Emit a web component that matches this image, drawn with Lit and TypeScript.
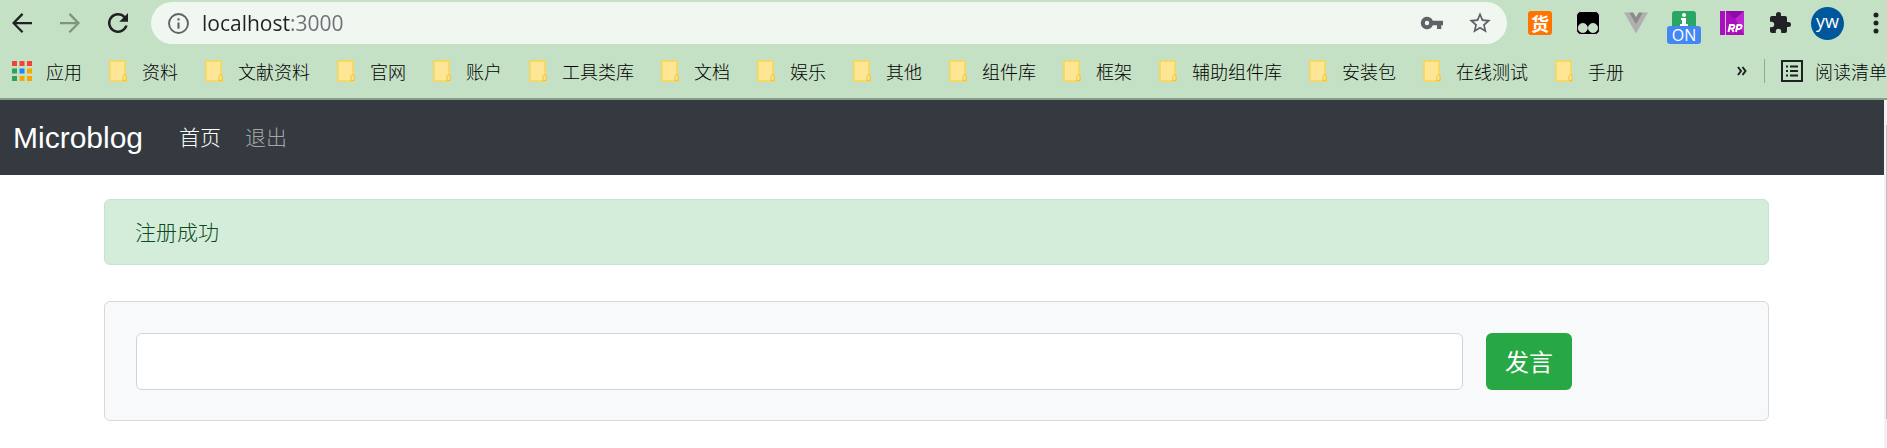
import { LitElement, html, css, svg } from "lit";
import { customElement } from "lit/decorators.js";

const BOOKMARKS = [
  "资料", "文献资料", "官网", "账户", "工具类库", "文档", "娱乐",
  "其他", "组件库", "框架", "辅助组件库", "安装包", "在线测试", "手册",
];

const APP_DOTS = [
  "#f44336", "#f44336", "#f44336",
  "#34a05a", "#1e88f5", "#f9a602",
  "#34a05a", "#f9a602", "#f9a602",
];

@customElement("browser-toolbar")
class BrowserToolbar extends LitElement {
  static styles = css`
    :host {
      display: flex;
      align-items: center;
      gap: 24px;
      padding: 2px 3px 0 7px;
      color: #202124;
      font-family: "Open Sans", "Noto Sans CJK SC", sans-serif;
    }
    button {
      display: flex;
      flex: none;
      align-items: center;
      justify-content: center;
      padding: 0;
      border: 0;
      background: none;
      color: inherit;
      font: inherit;
    }
    svg { display: block; }
    .nav { display: flex; gap: 18px; }
    .nav button:disabled { color: #7f947f; }
    .address {
      display: flex;
      flex: 1;
      min-width: 0;
      align-items: center;
      gap: 11px;
      box-sizing: border-box;
      height: 42px;
      margin: 0 -3px 0 -6px;
      padding: 0 14px 0 15px;
      border-radius: 21px;
      background: #f0f7f0;
      color: #5f6368;
    }
    .address input {
      flex: 1;
      min-width: 0;
      padding: 0;
      border: 0;
      outline: 0;
      font: 21px/30px "Open Sans", sans-serif;
      color: transparent;
      background: linear-gradient(90deg, #202124 89px, #6b7075 89px);
      -webkit-background-clip: text;
      background-clip: text;
    }
    .actions { display: flex; align-items: center; gap: 23px; }
    .ext { position: relative; }
    .goods {
      width: 24px;
      height: 24px;
      border-radius: 3px;
      background: #ff7300;
      color: #fff;
      font: 700 18px/24px "Noto Sans CJK SC", sans-serif;
    }
    .badge {
      position: absolute;
      top: 15px;
      left: -5px;
      width: 34px;
      height: 18px;
      border-radius: 3px;
      background: #4487f4;
      color: #fff;
      font: 16px/18px "Open Sans", sans-serif;
      text-align: center;
    }
    .avatar {
      width: 33px;
      height: 33px;
      margin: 0 0 0 -5px;
      border-radius: 50%;
      background: #01579b;
      color: #fff;
      font: 18px/28px "Open Sans", sans-serif;
      padding-bottom: 4px;
    }
  `;

  render() {
    return html`
      <div class="nav">
        <button aria-label="后退">
          <svg width="30" height="30" viewBox="0 0 24 24" fill="currentColor"><path d="M20 11.1H7.4l5.7-5.8L11.8 4 4 12l7.8 8 1.3-1.3-5.7-5.8H20z"/></svg>
        </button>
        <button aria-label="前进" disabled>
          <svg width="30" height="30" viewBox="0 0 24 24" fill="currentColor"><path d="M4 11.1h12.6l-5.7-5.8L12.2 4l7.8 8-7.8 8-1.3-1.3 5.7-5.8H4z"/></svg>
        </button>
        <button aria-label="重新加载">
          <svg width="30" height="30" viewBox="0 0 24 24" fill="currentColor"><path d="M17.65 6.35A8 8 0 1 0 19.73 14h-2.08A6 6 0 1 1 12 6c1.66 0 3.14.69 4.22 1.78L13 11h7V4z"/></svg>
        </button>
      </div>
      <div class="address">
        <svg width="25" height="25" viewBox="0 0 24 24" fill="currentColor"><path d="M11 17h2v-6h-2zm1-15a10 10 0 1 0 0 20 10 10 0 0 0 0-20zm0 18.2a8.2 8.2 0 1 1 0-16.4 8.2 8.2 0 0 1 0 16.4zM11 9h2V7h-2z"/></svg>
        <input aria-label="地址" value="localhost:3000" spellcheck="false" />
        <div class="actions">
          <button aria-label="密码">
            <svg width="24" height="24" viewBox="0 0 24 24" fill="currentColor"><path d="M12.9 9.700A6.300 6.300 0 1 0 12.900 14.300H17v3.700h4.300v-3.700h1.700V9.700zM7 14.200a2.200 2.200 0 1 1 0-4.400 2.200 2.200 0 0 1 0 4.400z"/></svg>
          </button>
          <button aria-label="收藏">
            <svg width="26" height="26" viewBox="0 0 24 24" fill="currentColor"><path d="M22 9.24l-7.19-.62L12 2 9.19 8.63 2 9.24l5.46 4.73L5.82 21 12 17.27 18.18 21l-1.63-7.03zM12 15.4l-3.76 2.27 1-4.28-3.32-2.88 4.38-.38L12 6.1l1.71 4.04 4.38.38-3.32 2.88 1 4.28z"/></svg>
          </button>
        </div>
      </div>
      <button class="goods">货</button>
      <button aria-label="脚本管理">
        <svg width="24" height="24" viewBox="0 0 24 24"><rect x=".5" y=".5" width="23" height="23" rx="4.5" fill="#000" stroke="#d9d9d9"/><circle cx="6.8" cy="17" r="4.6" fill="#c5e1c5" stroke="#eee" stroke-width=".7"/><circle cx="17" cy="17" r="4.6" fill="#c5e1c5" stroke="#eee" stroke-width=".7"/></svg>
      </button>
      <button aria-label="Vue">
        <svg width="24" height="24" viewBox="0 0 24 24"><path d="M0 1.5h5L12 13.5l7-12h5L12 22.5z" fill="#b0b0b0"/><path d="M5 1.5h4.3L12 6.2l2.7-4.7H19l-7 12z" fill="#8b8b8b"/></svg>
      </button>
      <button class="ext">
        <svg width="24" height="24" viewBox="0 0 24 24"><rect width="24" height="24" rx="3" fill="#2aa563"/><circle cx="12" cy="4" r="2" fill="#fff"/><path d="M9 7h5v6h2v2H8v-2h2V9H9z" fill="#fff"/></svg>
        <span class="badge">ON</span>
      </button>
      <button aria-label="RP">
        <svg width="24" height="24" viewBox="0 0 24 24"><path d="M0 0h5v24H0zM6 0h18v24H6z" fill="#a611bd"/><path d="M5 0h1v24H5z" fill="#dfbde3"/><path d="M6 0h18L15 8z" fill="#8b0ba6"/><path d="M24 0v24L15 8z" fill="#bd27d1"/><path d="M6 24l9-16 9 16z" fill="#a70db8"/><g fill="none" stroke="#fff" stroke-width="2"><path d="M8.500 21l1.500-7h3q1.800 0 1.300 1.900T12 17.600H9.500M12 17.600l1.500 3.400M16 21l1.500-7h2.700q1.800 0 1.300 2t-2.300 2h-2.500"/></g></svg>
      </button>
      <button aria-label="扩展程序">
        <svg width="24" height="24" viewBox="0 0 24 24" fill="currentColor"><path d="M20.500 11H19V7a2 2 0 0 0-2-2h-4V3.500a2.500 2.500 0 0 0-5 0V5H4a2 2 0 0 0-2 2v3.800h1.500a2.700 2.700 0 0 1 0 5.400H2V20c0 1.100.9 2 2 2h3.800v-1.500a2.700 2.700 0 0 1 5.400 0V22H17a2 2 0 0 0 2-2v-4h1.500a2.500 2.500 0 0 0 0-5z"/></svg>
      </button>
      <button class="avatar">yw</button>
      <button class="menu" aria-label="菜单">
        <svg width="16" height="30" viewBox="0 0 16 30" fill="currentColor"><circle cx="8" cy="7" r="2.500"/><circle cx="8" cy="15" r="2.500"/><circle cx="8" cy="23" r="2.500"/></svg>
      </button>
    `;
  }
}

@customElement("bookmark-bar")
class BookmarkBar extends LitElement {
  static styles = css`
    :host {
      display: flex;
      align-items: center;
      height: 54px;
      padding-left: 12px;
      overflow: hidden;
      color: #000;
      font: 300 18px/24px "Noto Sans CJK SC", sans-serif;
      white-space: nowrap;
    }
    a {
      display: flex;
      flex: none;
      align-items: center;
      gap: 15px;
      color: inherit;
      text-decoration: none;
    }
    svg { display: block; flex: none; color: #202124; }
    .list { display: flex; flex: 1; gap: 27px; min-width: 0; overflow: hidden; }
    .apps { gap: 14px; }
    button {
      flex: none;
      margin: 0 17px 0 0;
      padding: 0;
      border: 0;
      background: none;
      color: inherit;
    }
    .rule { flex: none; width: 1px; height: 24px; background: #94a994; }
    .reading { gap: 12px; margin-left: 16px; }
  `;

  render() {
    return html`
      <nav class="list" aria-label="书签">
        <a class="apps" href="#">
          <svg width="20" height="20" viewBox="0 0 20 20">
            ${APP_DOTS.map((c, i) => svg`<rect x=${(i % 3) * 7.5} y=${Math.floor(i / 3) * 7.5} width="5" height="5" fill=${c} />`)}
          </svg>
          应用
        </a>
        ${BOOKMARKS.map((name) => html`
          <a href="#">
            <svg width="18" height="22" viewBox="0 0 18 22"><path d="M1 1h15v14.500h1.200V21H1z" fill="#ffe694" stroke="#fbd54f" stroke-width="1.500"/><path d="M14 20.500v-4q0-1.500 1.500-1.500t1.500 1.500v4z" fill="#ffe694" stroke="#edc23c"/></svg>
            ${name}
          </a>`)}
      </nav>
      <button aria-label="更多书签">
        <svg width="10" height="10" viewBox="0 0 10 10" fill="none" stroke="currentColor" stroke-width="2"><path d="M1 1l3 4-3 4M5.500 1l3 4-3 4"/></svg>
      </button>
      <span class="rule"></span>
      <a class="reading" href="#">
        <svg width="22" height="22" viewBox="0 0 22 22" fill="currentColor"><path fill-rule="evenodd" d="M0 0h22v22H0zM2 2v18h18V2z"/><path d="M5 5.500h2v2H5zm4 0h8v2H9zM5 10h2v2H5zm4 0h8v2H9zM5 14.500h2v2H5zm4 0h8v2H9z"/></svg>
        阅读清单
      </a>
    `;
  }
}

@customElement("app-root")
class AppRoot extends LitElement {
  static styles = css`
    :host {
      display: flex;
      flex-direction: column;
      min-height: 100vh;
      overflow: hidden;
      background: #fff;
      font: 300 21px/32px "Liberation Sans", "Noto Sans CJK SC", sans-serif;
    }
    .chrome { border-bottom: 2px solid #8a9c8b; background: #c5e1c5; }
    .view { display: flex; flex: 1; }
    .page { flex: 1; min-width: 0; }
    .navbar {
      display: flex;
      align-items: center;
      gap: 24px;
      height: 75px;
      padding: 0 13px;
      background: #343a40;
    }
    .navbar a { color: #a4a7a9; text-decoration: none; }
    .navbar .brand { margin-right: 12px; color: #fff; font-size: 30px; }
    .navbar .active { color: #fff; }
    main {
      display: flex;
      flex-direction: column;
      gap: 36px;
      padding: 24px 115px 24px 104px;
    }
    .alert {
      padding: 17px 30px 15px;
      border: 1px solid #c3e6cb;
      border-radius: 6px;
      background: #d4edda;
      color: #0b4a1a;
    }
    .composer {
      display: grid;
      grid-template-columns: 37fr 7fr;
      column-gap: 23px;
      padding: 31px 31px 30px;
      border: 1px solid #d6d8db;
      border-radius: 6px;
      background: #f8f9fa;
    }
    .composer input {
      box-sizing: border-box;
      width: 100%;
      min-width: 0;
      height: 57px;
      padding: 0 20px;
      border: 1px solid #ced4da;
      border-radius: 6px;
      background: #fff;
      font: inherit;
    }
    .composer button {
      justify-self: start;
      padding: 0 19px 2px;
      border: 0;
      border-radius: 6px;
      background: #28a745;
      color: #fff;
      font: 400 24px/54px "Noto Sans CJK SC", sans-serif;
    }
    .scrollbar {
      display: flex;
      flex: none;
      box-sizing: border-box;
      width: 3px;
      padding: 25px 0 29px 2px;
      background: #f1f1f1;
    }
    .thumb { flex: 1; background: #c1c1c1; }
  `;

  render() {
    return html`
      <header class="chrome">
        <browser-toolbar></browser-toolbar>
        <bookmark-bar></bookmark-bar>
      </header>
      <div class="view">
        <div class="page">
          <nav class="navbar">
            <a class="brand" href="#">Microblog</a>
            <a class="active" href="#">首页</a>
            <a href="#">退出</a>
          </nav>
          <main>
            <div class="alert" role="status">注册成功</div>
            <form class="composer" @submit=${(e: Event) => e.preventDefault()}>
              <input type="text" name="post" aria-label="发言内容" />
              <button type="submit">发言</button>
            </form>
          </main>
        </div>
        <div class="scrollbar"><div class="thumb"></div></div>
      </div>
    `;
  }
}
